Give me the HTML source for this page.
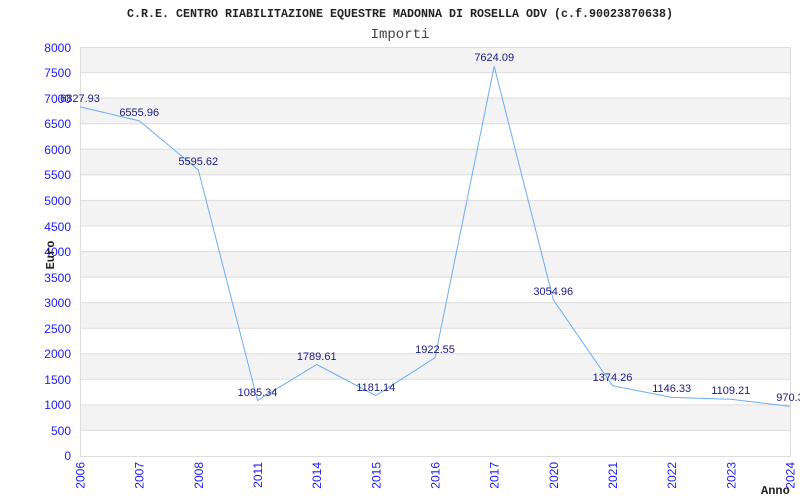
<!DOCTYPE html>
<html><head><meta charset="utf-8"><style>html,body{margin:0;padding:0;background:#fff;}svg{display:block}</style></head>
<body>
<svg width="800" height="500" xmlns="http://www.w3.org/2000/svg">
<rect width="800" height="500" fill="#fff"/>
<text x="400" y="17" text-anchor="middle" font-family="Liberation Mono, monospace" font-weight="bold" font-size="12" fill="#222" textLength="546" lengthAdjust="spacingAndGlyphs">C.R.E. CENTRO RIABILITAZIONE EQUESTRE MADONNA DI ROSELLA ODV (c.f.90023870638)</text>
<text x="400" y="38" text-anchor="middle" font-family="Liberation Mono, monospace" font-size="14" fill="#444">Importi</text>
<g fill="#f3f3f3">
<rect x="80" y="47" width="710" height="25.6"/>
<rect x="80" y="98.1" width="710" height="25.6"/>
<rect x="80" y="149.3" width="710" height="25.6"/>
<rect x="80" y="200.4" width="710" height="25.6"/>
<rect x="80" y="251.5" width="710" height="25.6"/>
<rect x="80" y="302.6" width="710" height="25.6"/>
<rect x="80" y="353.8" width="710" height="25.6"/>
<rect x="80" y="404.9" width="710" height="25.6"/>
</g>
<g stroke="#ddd" stroke-width="1">
<line x1="80" x2="790" y1="47.5" y2="47.5"/><line x1="80" x2="790" y1="72.6" y2="72.6"/><line x1="80" x2="790" y1="98.1" y2="98.1"/><line x1="80" x2="790" y1="123.7" y2="123.7"/><line x1="80" x2="790" y1="149.3" y2="149.3"/><line x1="80" x2="790" y1="174.8" y2="174.8"/><line x1="80" x2="790" y1="200.4" y2="200.4"/><line x1="80" x2="790" y1="226" y2="226"/><line x1="80" x2="790" y1="251.5" y2="251.5"/><line x1="80" x2="790" y1="277.1" y2="277.1"/><line x1="80" x2="790" y1="302.6" y2="302.6"/><line x1="80" x2="790" y1="328.2" y2="328.2"/><line x1="80" x2="790" y1="353.8" y2="353.8"/><line x1="80" x2="790" y1="379.3" y2="379.3"/><line x1="80" x2="790" y1="404.9" y2="404.9"/><line x1="80" x2="790" y1="430.4" y2="430.4"/>
<line x1="80.5" x2="80.5" y1="47" y2="456"/><line x1="790.5" x2="790.5" y1="47" y2="456"/><line x1="80" x2="791" y1="456.5" y2="456.5"/>
</g>
<g font-family="Liberation Sans, sans-serif" font-size="12" fill="#1a1aff" text-anchor="end">
<text x="71" y="52">8000</text><text x="71" y="77">7500</text><text x="71" y="103">7000</text><text x="71" y="128">6500</text><text x="71" y="154">6000</text><text x="71" y="179">5500</text><text x="71" y="205">5000</text><text x="71" y="231">4500</text><text x="71" y="256">4000</text><text x="71" y="282">3500</text><text x="71" y="307">3000</text><text x="71" y="333">2500</text><text x="71" y="358">2000</text><text x="71" y="384">1500</text><text x="71" y="409">1000</text><text x="71" y="435">500</text><text x="71" y="460">0</text>
</g>
<g font-family="Liberation Sans, sans-serif" font-size="12" fill="#1a1aff" text-anchor="end">
<text transform="translate(84.5,462) rotate(-90)">2006</text>
<text transform="translate(143.7,462) rotate(-90)">2007</text>
<text transform="translate(202.8,462) rotate(-90)">2008</text>
<text transform="translate(262,462) rotate(-90)">2011</text>
<text transform="translate(321.2,462) rotate(-90)">2014</text>
<text transform="translate(380.3,462) rotate(-90)">2015</text>
<text transform="translate(439.5,462) rotate(-90)">2016</text>
<text transform="translate(498.7,462) rotate(-90)">2017</text>
<text transform="translate(557.8,462) rotate(-90)">2020</text>
<text transform="translate(617,462) rotate(-90)">2021</text>
<text transform="translate(676.2,462) rotate(-90)">2022</text>
<text transform="translate(735.3,462) rotate(-90)">2023</text>
<text transform="translate(794.5,462) rotate(-90)">2024</text>
</g>
<text transform="translate(54,255) rotate(-90)" text-anchor="middle" font-family="Liberation Mono, monospace" font-weight="bold" font-size="12" fill="#222">Euro</text>
<text x="761" y="494" font-family="Liberation Mono, monospace" font-weight="bold" font-size="12" fill="#222">Anno</text>
<polyline fill="none" stroke="#6aaef0" stroke-width="1" points="80,106.9 139.2,120.8 198.3,169.9 257.5,400.5 316.7,364.5 375.8,395.6 435,357.7 494.2,66.2 553.3,299.8 612.5,385.7 671.7,397.4 730.8,399.3 790,406.4"/>
<g font-family="Liberation Sans, sans-serif" font-size="11" fill="#1a1a80" text-anchor="middle">
<text x="80" y="102">6827.93</text>
<text x="139.2" y="116">6555.96</text>
<text x="198.3" y="165">5595.62</text>
<text x="257.5" y="396">1085.34</text>
<text x="316.7" y="360">1789.61</text>
<text x="375.8" y="391">1181.14</text>
<text x="435" y="353">1922.55</text>
<text x="494.2" y="61">7624.09</text>
<text x="553.3" y="295">3054.96</text>
<text x="612.5" y="381">1374.26</text>
<text x="671.7" y="392">1146.33</text>
<text x="730.8" y="394">1109.21</text>
<text x="790" y="401">970.3</text>
</g>
</svg>
</body></html>
